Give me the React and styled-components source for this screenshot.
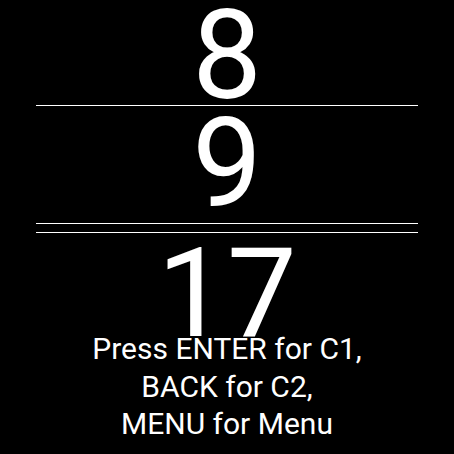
import styled, { createGlobalStyle } from 'styled-components';

const GlobalStyle = createGlobalStyle`
  html, body {
    margin: 0;
    padding: 0;
    background: #000;
  }
  body {
    font-family: Roboto, "Liberation Sans", sans-serif;
  }
`;

const Screen = styled.div`
  width: 454px;
  height: 454px;
  background: #000;
  color: #fff;
  display: flex;
  flex-direction: column;
  align-items: center;
  overflow: hidden;
`;

const Value = styled.div`
  width: 100%;
  height: ${(p) => p.$h}px;
  line-height: ${(p) => p.$lh}px;
  font-size: 124px;
  text-align: center;
  white-space: nowrap;
`;

const Divider = styled.div`
  width: 382px;
  height: 1px;
  background: #fff;
  flex: none;
  margin-bottom: ${(p) => p.$gap || 0}px;
`;

const Prompt = styled.div`
  font-size: 30px;
  line-height: 37.5px;
  text-align: center;
  position: relative;
`;

export default function App() {
  return (
    <>
      <GlobalStyle />
      <Screen>
        <Value $h={105} $lh={112}>8</Value>
        <Divider />
        <Value $h={117} $lh={116}>9</Value>
        <Divider $gap={8} />
        <Divider />
        <Value $h={97} $lh={122}>17</Value>
        <Prompt>
          Press ENTER for C1,
          <br />
          BACK for C2,
          <br />
          MENU for Menu
        </Prompt>
      </Screen>
    </>
  );
}
